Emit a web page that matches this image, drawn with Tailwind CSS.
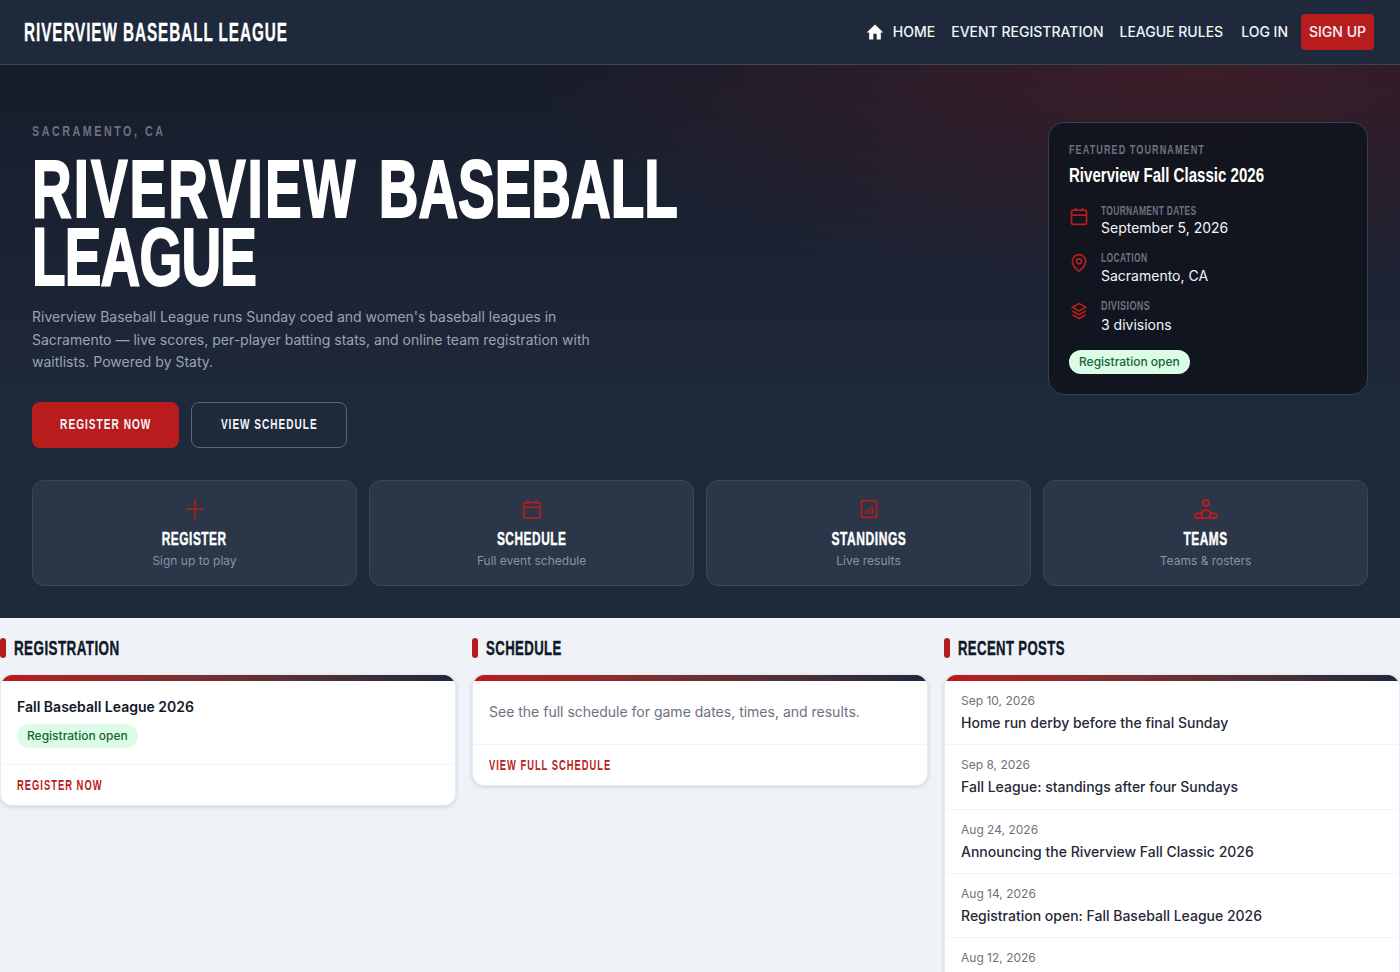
<!DOCTYPE html>
<html lang="en">
<head>
    <meta charset="UTF-8">
    <title>Riverview Baseball League</title>
    <script src="https://cdn.jsdelivr.net/npm/@tailwindcss/browser@4"></script>
</head>
<body class="h-[972px] overflow-hidden bg-[#eff3f8] font-['Inter',sans-serif] text-sm text-[#111827]">
    <header class="flex h-[65px] items-center justify-between border-b border-[#3b4657] bg-[#1e293b] pl-6 pr-[26px]">
        <a class="mt-[2px] origin-left scale-x-[.612] whitespace-nowrap font-['Liberation_Sans',sans-serif] text-[25px] font-bold tracking-[1.5px] text-white [-webkit-text-stroke:0.3px]">RIVERVIEW BASEBALL LEAGUE</a>
        <nav class="flex items-center text-sm font-medium text-[#f1f5f9]">
            <svg class="mr-2 h-5 w-5 fill-white" viewBox="0 0 24 24"><path d="M10 21v-7h4v7h5v-8.500h3L12 3 2 12.500h3V21z"/></svg>
            <a>HOME</a>
            <a class="ml-4">EVENT REGISTRATION</a>
            <a class="ml-4">LEAGUE RULES</a>
            <a class="ml-[18px]">LOG IN</a>
            <a class="ml-[13px] flex h-9 items-center rounded bg-[#b91c1c] px-2">SIGN UP</a>
        </nav>
    </header>

    <section class="h-[553px] bg-[radial-gradient(ellipse_48%_42%_at_86%_0%,#3d1d28_0%,rgba(61,29,40,0)_100%),linear-gradient(180deg,#171c2a_0%,#1e293b_62%)] px-8 pt-14">
        <div class="flex justify-between">
            <div class="w-[660px]">
                <p class="origin-left scale-x-[.717] whitespace-nowrap font-['Liberation_Sans',sans-serif] text-[15px] font-bold leading-5 tracking-[3.5px] text-[#6b7280]">SACRAMENTO, CA</p>
                <h1 class="mt-[14px] origin-left scale-x-[.67] whitespace-nowrap font-['Liberation_Sans',sans-serif] text-[82px] font-bold leading-[68px] text-white [word-spacing:9px] [-webkit-text-stroke:2px_white]"><span class="tracking-[3px]">RIVERVIEW</span> BASEBALL<br><span class="tracking-[-1.2px]">LEAGUE</span></h1>
                <p class="mt-[15px] w-[590px] text-sm leading-[22.5px] text-[#9ca3af]">Riverview Baseball League runs Sunday coed and women's baseball leagues in Sacramento — live scores, per-player batting stats, and online team registration with waitlists. Powered by Staty.</p>
                <div class="mt-[28.5px] flex gap-3 font-['Liberation_Sans',sans-serif] text-[15px] font-bold tracking-[1.5px] text-[#f1f5f9]">
                    <a class="flex h-[46px] w-[147px] items-center justify-center rounded-lg bg-[#b91c1c] pb-[2px]"><span class="scale-x-[.674] whitespace-nowrap">REGISTER NOW</span></a>
                    <a class="flex h-[46px] w-[156px] items-center justify-center rounded-lg border border-[#5b6679] pb-[2px]"><span class="scale-x-[.669] whitespace-nowrap">VIEW SCHEDULE</span></a>
                </div>
            </div>
            <aside class="mt-px h-[273px] w-[320px] rounded-2xl border border-[#334155] bg-[#11141d]/90 px-5 pt-[19px]">
                <p class="origin-left scale-x-[.70] whitespace-nowrap font-['Liberation_Sans',sans-serif] text-[13px] font-bold leading-4 tracking-[1.5px] text-[#6b7280]">FEATURED TOURNAMENT</p>
                <h2 class="mt-[3px] origin-left scale-x-[.717] whitespace-nowrap font-['Liberation_Sans',sans-serif] text-[21px] font-bold leading-7 text-white">Riverview Fall Classic 2026</h2>
                <div class="mt-[14px] flex h-[34px] gap-3">
                    <svg class="mt-[3px] h-5 w-5 shrink-0 fill-none stroke-[#b91c1c] stroke-2" viewBox="0 0 24 24"><rect x="3" y="5" width="18" height="17" rx="2"/><path d="M3 11h18M8 2v4M16 2v4"/></svg>
                    <div><p class="origin-left scale-x-[.65] whitespace-nowrap font-['Liberation_Sans',sans-serif] text-[13px] font-bold leading-4 tracking-[0.5px] text-[#6b7280]">TOURNAMENT DATES</p><p class="leading-[18px] text-[#f1f5f9]">September 5, 2026</p></div>
                </div>
                <div class="mt-[13px] flex h-[34px] gap-3">
                    <svg class="mt-[3px] h-5 w-5 shrink-0 fill-none stroke-[#b91c1c] stroke-2" viewBox="0 0 24 24"><path d="M20 10c0 6-8 12-8 12s-8-6-8-12a8 8 0 0 1 16 0z"/><circle cx="12" cy="10" r="3"/></svg>
                    <div><p class="origin-left scale-x-[.655] whitespace-nowrap font-['Liberation_Sans',sans-serif] text-[13px] font-bold leading-4 tracking-[0.5px] text-[#6b7280]">LOCATION</p><p class="mt-px leading-[18px] text-[#f1f5f9]">Sacramento, CA</p></div>
                </div>
                <div class="mt-[14px] flex h-[34px] gap-3">
                    <svg class="mt-[3px] h-5 w-5 shrink-0 fill-none stroke-[#b91c1c] stroke-2" viewBox="0 0 24 24"><path d="M12 3l8 4.500-8 4.500-8-4.500zM4 12l8 4.500 8-4.500M4 16.500l8 4.500 8-4.500"/></svg>
                    <div><p class="origin-left scale-x-[.70] whitespace-nowrap font-['Liberation_Sans',sans-serif] text-[13px] font-bold leading-4 tracking-[0.5px] text-[#6b7280]">DIVISIONS</p><p class="mt-[2px] leading-[18px] text-[#f1f5f9]">3 divisions</p></div>
                </div>
                <span class="mt-[18px] inline-flex h-6 items-center rounded-full bg-[#dcfce7] px-[10px] text-xs font-medium text-[#166534]">Registration open</span>
            </aside>
        </div>

        <div class="mt-8 grid grid-cols-4 gap-3">
            <a class="flex h-[106px] flex-col items-center rounded-xl border border-[#3b4657] bg-[#2b3648] pt-[18px]">
                <svg class="h-5 w-5 fill-none stroke-[#b91c1c] stroke-[1.5]" viewBox="0 0 20 20"><path d="M10 0v20M1 10h18"/></svg>
                <span class="mt-2 scale-x-[.66] whitespace-nowrap font-['Liberation_Sans',sans-serif] text-[18px] font-bold leading-6 tracking-[0.8px] text-white [-webkit-text-stroke:0.4px]">REGISTER</span>
                <span class="mt-[2px] text-xs leading-4 text-[#8893a4]">Sign up to play</span>
            </a>
            <a class="flex h-[106px] flex-col items-center rounded-xl border border-[#3b4657] bg-[#2b3648] pt-[18px]">
                <svg class="h-5 w-5 fill-none stroke-[#b91c1c] stroke-2" viewBox="0 0 24 24"><rect x="2" y="4" width="20" height="19" rx="3"/><path d="M2 10h20M7 1v5M17 1v5"/></svg>
                <span class="mt-2 scale-x-[.66] whitespace-nowrap font-['Liberation_Sans',sans-serif] text-[18px] font-bold leading-6 tracking-[0.8px] text-white [-webkit-text-stroke:0.4px]">SCHEDULE</span>
                <span class="mt-[2px] text-xs leading-4 text-[#8893a4]">Full event schedule</span>
            </a>
            <a class="flex h-[106px] flex-col items-center rounded-xl border border-[#3b4657] bg-[#2b3648] pt-[18px]">
                <svg class="h-5 w-5 fill-none stroke-[#b91c1c] stroke-2" viewBox="0 0 24 24"><rect x="3" y="2" width="18" height="20" rx="2"/><path d="M8 18v-4M12 18v-7M16 18V8"/></svg>
                <span class="mt-2 scale-x-[.67] whitespace-nowrap font-['Liberation_Sans',sans-serif] text-[18px] font-bold leading-6 tracking-[0.8px] text-white [-webkit-text-stroke:0.4px]">STANDINGS</span>
                <span class="mt-[2px] text-xs leading-4 text-[#8893a4]">Live results</span>
            </a>
            <a class="flex h-[106px] flex-col items-center rounded-xl border border-[#3b4657] bg-[#2b3648] pt-[18px]">
                <svg class="h-5 w-6 fill-none stroke-[#b91c1c] stroke-2" viewBox="0 0 24 20"><circle cx="12" cy="4" r="3"/><path d="M3 19a2 2 0 0 1-2-2c0-3 4-3 6-3 1-2 3-3 5-3s4 1 5 3c2 0 6 0 6 3a2 2 0 0 1-2 2zM8 14v5M16 14v5"/></svg>
                <span class="mt-2 scale-x-[.66] whitespace-nowrap font-['Liberation_Sans',sans-serif] text-[18px] font-bold leading-6 tracking-[0.8px] text-white [-webkit-text-stroke:0.4px]">TEAMS</span>
                <span class="mt-[2px] text-xs leading-4 text-[#8893a4]">Teams &amp; rosters</span>
            </a>
        </div>
    </section>

    <main class="grid grid-cols-3 gap-4 pt-5">
        <section>
            <h2 class="flex items-center gap-2 font-['Liberation_Sans',sans-serif] text-[20px] font-bold leading-5 tracking-[0.6px] text-[#111827] [-webkit-text-stroke:0.4px]"><span class="h-5 w-[6px] rounded-[3px] bg-[#b91c1c]"></span><span class="origin-left scale-x-[.673] whitespace-nowrap">REGISTRATION</span></h2>
            <div class="mt-[17px] overflow-hidden rounded-xl border-x border-b border-[#e5e9f0] bg-white shadow-[0_1px_4px_rgba(15,23,42,0.15)]">
                <div class="h-[6px] bg-gradient-to-r from-[#b91c1c] to-[#1e293b]"></div>
                <div class="px-4 pb-4 pt-4">
                    <p class="font-semibold leading-5">Fall Baseball League 2026</p>
                    <span class="mt-[7px] inline-flex h-6 items-center rounded-full bg-[#dcfce7] px-[10px] text-xs font-medium text-[#166534]">Registration open</span>
                </div>
                <div class="border-t border-[#f1f5f9] px-4 pb-[13px] pt-[14px] font-['Liberation_Sans',sans-serif] text-sm font-bold leading-[13px] tracking-[1.5px] text-[#b91c1c]"><span class="inline-block origin-left scale-x-[.67] whitespace-nowrap">REGISTER NOW</span></div>
            </div>
        </section>
        <section>
            <h2 class="flex items-center gap-2 font-['Liberation_Sans',sans-serif] text-[20px] font-bold leading-5 tracking-[0.6px] text-[#111827] [-webkit-text-stroke:0.4px]"><span class="h-5 w-[6px] rounded-[3px] bg-[#b91c1c]"></span><span class="origin-left scale-x-[.66] whitespace-nowrap">SCHEDULE</span></h2>
            <div class="mt-[17px] overflow-hidden rounded-xl border-x border-b border-[#e5e9f0] bg-white shadow-[0_1px_4px_rgba(15,23,42,0.15)]">
                <div class="h-[6px] bg-gradient-to-r from-[#b91c1c] to-[#1e293b]"></div>
                <p class="h-[63px] px-4 pt-5 text-sm leading-[22px] text-[#6b7280]">See the full schedule for game dates, times, and results.</p>
                <div class="border-t border-[#f1f5f9] px-4 pb-[13px] pt-[14px] font-['Liberation_Sans',sans-serif] text-sm font-bold leading-[13px] tracking-[1.5px] text-[#b91c1c]"><span class="inline-block origin-left scale-x-[.667] whitespace-nowrap">VIEW FULL SCHEDULE</span></div>
            </div>
        </section>
        <section>
            <h2 class="flex items-center gap-2 font-['Liberation_Sans',sans-serif] text-[20px] font-bold leading-5 tracking-[0.6px] text-[#111827] [-webkit-text-stroke:0.4px]"><span class="h-5 w-[6px] rounded-[3px] bg-[#b91c1c]"></span><span class="origin-left scale-x-[.656] whitespace-nowrap">RECENT POSTS</span></h2>
            <div class="mt-[17px] overflow-hidden rounded-xl border-x border-b border-[#e5e9f0] bg-white shadow-[0_1px_4px_rgba(15,23,42,0.15)]">
                <div class="h-[6px] bg-gradient-to-r from-[#b91c1c] to-[#1e293b]"></div>
                <div class="h-[64px] border-b border-[#f1f5f9] px-4 pt-[10px]"><p class="text-xs leading-5 text-[#6b7280]">Sep 10, 2026</p><p class="mt-px font-medium leading-[22px] text-[#1f2937]">Home run derby before the final Sunday</p></div>
                <div class="h-[65px] border-b border-[#f1f5f9] px-4 pt-[10px]"><p class="text-xs leading-5 text-[#6b7280]">Sep 8, 2026</p><p class="mt-px font-medium leading-[22px] text-[#1f2937]">Fall League: standings after four Sundays</p></div>
                <div class="h-[64px] border-b border-[#f1f5f9] px-4 pt-[10px]"><p class="text-xs leading-5 text-[#6b7280]">Aug 24, 2026</p><p class="mt-px font-medium leading-[22px] text-[#1f2937]">Announcing the Riverview Fall Classic 2026</p></div>
                <div class="h-[64px] border-b border-[#f1f5f9] px-4 pt-[10px]"><p class="text-xs leading-5 text-[#6b7280]">Aug 14, 2026</p><p class="mt-px font-medium leading-[22px] text-[#1f2937]">Registration open: Fall Baseball League 2026</p></div>
                <div class="h-[64px] px-4 pt-[10px]"><p class="text-xs leading-5 text-[#6b7280]">Aug 12, 2026</p></div>
            </div>
        </section>
    </main>
</body>
</html>
